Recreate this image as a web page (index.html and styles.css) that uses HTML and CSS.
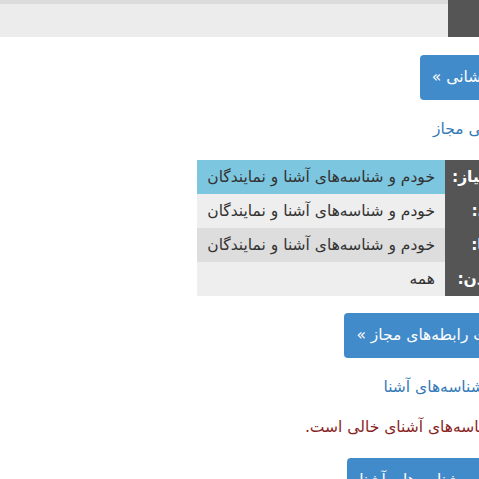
FILE: index.html
```html
<!DOCTYPE html>
<html lang="fa">
<head>
<meta charset="utf-8">
<title>تنظیمات</title>
<link rel="stylesheet" href="styles.css">
</head>
<body>
<div class="page">
  <header class="topbar">
    <div class="topbar-dark"></div>
    <div class="topbar-main"></div>
  </header>
  <main class="content">
    <div class="block"><a class="btn" href="#">تنظیم نشانی »</a></div>
    <div class="block"><a class="link" href="#">و دسترسی مجاز</a></div>
    <table class="perm">
      <tr class="row-info"><th>نوع امتیاز:</th><td>خودم و شناسه‌های آشنا و نمایندگان</td></tr>
      <tr class="row-light"><th>آشنایی:</th><td>خودم و شناسه‌های آشنا و نمایندگان</td></tr>
      <tr class="row-mid"><th>پیغام‌ها:</th><td>خودم و شناسه‌های آشنا و نمایندگان</td></tr>
      <tr class="row-light"><th>فرستادن:</th><td>همه</td></tr>
    </table>
    <div class="block"><a class="btn" href="#">تنظیمات رابطه‌های مجاز »</a></div>
    <div class="block"><a class="link" href="#">فهرست شناسه‌های آشنا</a></div>
    <p class="empty">لیست شناسه‌های آشنای خالی است.</p>
    <div class="block"><a class="btn" href="#">افزودن به شناسه‌های آشنا</a></div>
  </main>
</div>
</body>
</html>
```

FILE: styles.css
```css
html, body {
  margin: 0;
  padding: 0;
  background: #fff;
  overflow: hidden;
}
body {
  font-family: "DejaVu Sans", sans-serif;
  font-size: 15.5px;
  color: #333;
}
.page {
  width: 540px;
  direction: rtl;
}
.topbar {
  display: flex;
  height: 33px;
  border-top: 4px solid #dcdcdc;
  background: #ececec;
}
.topbar-dark {
  width: 92px;
  margin-top: -4px;
  height: 37px;
  background: #555;
}
.topbar-main {
  flex: 1;
}
.content {
  padding: 18px 0 0 0;
}
.block {
  display: flex;
}
.btn {
  display: inline-block;
  background: #428bca;
  color: #fff;
  text-decoration: none;
  padding: 0 12px;
  height: 45px;
  line-height: 45px;
  border-radius: 4px;
}
.link {
  color: #337ab7;
  text-decoration: none;
  margin: 20px 0 22px;
  line-height: 18px;
}
.perm {
  border-collapse: collapse;
  margin-bottom: 17px;
}
.perm th, .perm td {
  height: 34px;
  white-space: nowrap;
}
.perm th {
  padding: 0 8px 0 7px;
  background: #555;
  color: #fff;
  font-weight: bold;
  text-align: right;
}
.perm td {
  padding: 0 10px;
  text-align: right;
  color: #333;
}
.row-info td { background: #7cc6e0; }
.row-light td { background: #eee; }
.row-mid td { background: #ddd; }
.empty {
  color: #8a1f1f;
  margin: 0 0 22px;
  line-height: 18px;
}
```
